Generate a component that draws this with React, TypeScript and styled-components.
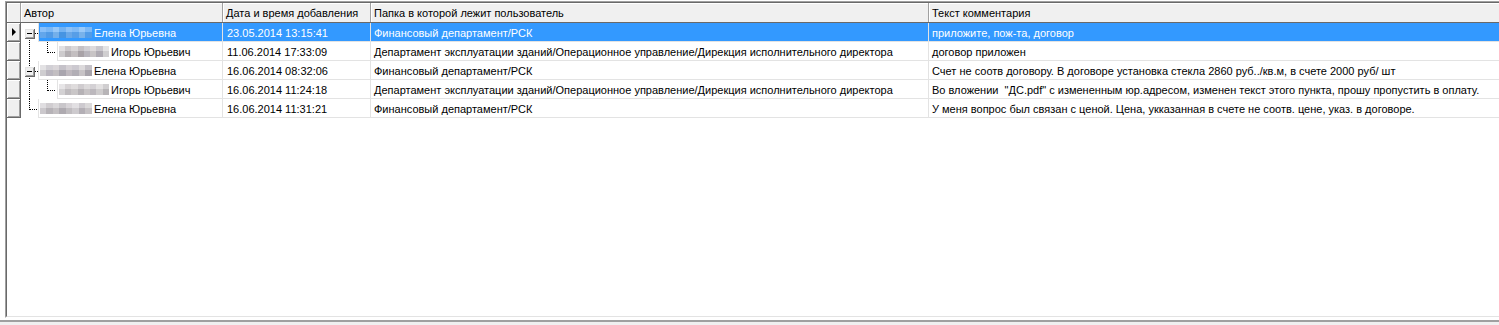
import React from "react";
import styled, { createGlobalStyle, css } from "styled-components";

const GlobalStyle = createGlobalStyle`
  html, body {
    margin: 0;
    padding: 0;
    background: #ffffff;
    overflow: hidden;
  }
  body {
    font-family: "Liberation Sans", Arial, sans-serif;
    font-size: 11px;
    color: #000;
  }
`;

const COLS = "14px 202px 148px 558px 1fr";

const Page = styled.div`
  width: 1499px;
  height: 325px;
  overflow: hidden;
  display: flex;
  flex-direction: column;
`;

const Frame = styled.div`
  margin: 1px 0 0 5px;
  width: 1510px;
  height: 319px;
  box-sizing: border-box;
  border-top: 1px solid #a0a0a0;
  border-left: 1px solid #a0a0a0;
  border-bottom: 1px solid #ffffff;
`;

const Inner = styled.div`
  height: 100%;
  box-sizing: border-box;
  border-top: 1px solid #696969;
  border-left: 1px solid #696969;
  border-bottom: 1px solid #e3e3e3;
  background: #fff;
`;

const BottomBar = styled.div`
  margin-top: 2px;
  height: 3px;
  border-top: 2px solid #a0a0a0;
  background: #f0f0f0;
`;

const HeaderRow = styled.div`
  display: grid;
  grid-template-columns: ${COLS};
  height: 20px;
  box-sizing: border-box;
  border-bottom: 1px solid #696969;
  background: #f0f0f0;
`;

const HeaderCell = styled.div`
  box-sizing: border-box;
  border-right: 1px solid #a0a0a0;
  box-shadow: inset 1px 1px 0 #ffffff;
  padding: 2px 0 0 3px;
  line-height: 17px;
  white-space: nowrap;
  overflow: hidden;
`;

const Corner = styled(HeaderCell)`
  padding: 0;
`;

const DataRow = styled.div`
  display: grid;
  grid-template-columns: ${COLS};
  height: 19px;
`;

const RowHead = styled.div`
  box-sizing: border-box;
  background: #f0f0f0;
  border-right: 1px solid #696969;
  border-bottom: 1px solid #696969;
  box-shadow: inset 1px 1px 0 #ffffff, inset -1px -1px 0 #a0a0a0;
  display: flex;
  align-items: center;
  justify-content: center;
`;

const Pointer = styled.span`
  width: 0;
  height: 0;
  border-left: 4px solid #000;
  border-top: 4px solid transparent;
  border-bottom: 4px solid transparent;
  margin-left: 1px;
`;

const selectedCss = css`
  background: #3399ff;
  color: #ffffff;
`;

const Cell = styled.div<{ $selected?: boolean }>`
  box-sizing: border-box;
  border-right: 1px solid #e3e3e3;
  border-bottom: 1px solid #e3e3e3;
  padding: 2px 0 0 3px;
  line-height: 16px;
  white-space: pre;
  overflow: hidden;
  ${(p) => p.$selected && selectedCss}
`;

const DateCell = styled(Cell)`
  padding-left: 4px;
`;

const AuthorCell = styled.div`
  display: flex;
  border-right: 1px solid #e3e3e3;
  box-sizing: border-box;
`;

const Gutter = styled.svg`
  flex: none;
  display: block;
`;

const NameCell = styled.div<{ $selected?: boolean }>`
  flex: 1;
  display: flex;
  align-items: center;
  gap: 2px;
  box-sizing: border-box;
  border-left: 1px solid #e3e3e3;
  border-bottom: 1px solid #e3e3e3;
  padding: 2px 0 0 1px;
  line-height: 16px;
  white-space: nowrap;
  ${(p) => p.$selected && selectedCss}
`;

const Blur = styled.span<{ $w: number }>`
  display: inline-block;
  width: ${(p) => p.$w}px;
  height: 11px;
  margin-top: -1px;
  filter: blur(0.7px);
  opacity: 0.9;
`;

const Blank = styled.div`
  flex: 1;
`;

type Row = {
  level: number;
  kind: "rootOpen" | "rootLast" | "child";
  first?: boolean;
  name: string;
  date: string;
  folder: string;
  comment: string;
  selected?: boolean;
  blur: string[];
};

const FIN = "Финансовый департамент/РСК";
const DEP =
  "Департамент эксплуатации зданий/Операционное управление/Дирекция исполнительного директора";

const rows: Row[] = [
  {
    level: 0,
    kind: "rootOpen",
    first: true,
    name: "Елена Юрьевна",
    date: "23.05.2014 13:15:41",
    folder: FIN,
    comment: "приложите, пож-та, договор",
    selected: true,
    blur: ["#6fb2f8", "#5aa5f2", "#82bdf6", "#4e9ded", "#76b4f4", "#62a9f3", "#88c0f7", "#5ba7f4"],
  },
  {
    level: 1,
    kind: "child",
    name: "Игорь Юрьевич",
    date: "11.06.2014 17:33:09",
    folder: DEP,
    comment: "договор приложен",
    blur: ["#d4d2d4", "#b5b0b4", "#c9c4c6", "#a9a3a8", "#bcb8c0", "#cfcacb", "#b1adb5", "#d8d6d8"],
  },
  {
    level: 0,
    kind: "rootOpen",
    name: "Елена Юрьевна",
    date: "16.06.2014 08:32:06",
    folder: FIN,
    comment: "Счет не соотв договору. В договоре установка стекла 2860 руб../кв.м, в счете 2000 руб/ шт",
    blur: ["#d6d4d8", "#bdb9c2", "#c8c3c7", "#aaa6b0", "#c2bcc2", "#b4b0b9", "#cdc9cc", "#a8a4ac"],
  },
  {
    level: 1,
    kind: "child",
    name: "Игорь Юрьевич",
    date: "16.06.2014 11:24:18",
    folder: DEP,
    comment: "Во вложении  \"ДС.pdf\" с измененным юр.адресом, изменен текст этого пункта, прошу пропустить в оплату.",
    blur: ["#dcdadc", "#c4bfc2", "#d0cccd", "#b9b4b8", "#cdc9cb", "#c0bcc1", "#d6d3d4", "#bbb7bb"],
  },
  {
    level: 0,
    kind: "rootLast",
    name: "Елена Юрьевна",
    date: "16.06.2014 11:31:21",
    folder: FIN,
    comment: "У меня вопрос был связан с ценой. Цена, укказанная в счете не соотв. цене, указ. в договоре.",
    blur: ["#d2cfd3", "#bab5bb", "#c9c5c8", "#b0abb2", "#c5c0c5", "#d4d1d5", "#b6b1b8", "#cbc7ca"],
  },
];

function blurBackground(colors: string[]) {
  const n = colors.length;
  const stops = colors
    .map((c, i) => `${c} ${(i * 100) / n}% ${((i + 1) * 100) / n}%`)
    .join(", ");
  return `linear-gradient(180deg, rgba(255,255,255,0.25) 0 45%, rgba(0,0,0,0.06) 45% 100%), linear-gradient(90deg, ${stops})`;
}

const DOT = "1 1";

function TreeLines({ row }: { row: Row }) {
  const width = row.level === 0 ? 17 : 36;
  const mid = 10.5;
  return (
    <Gutter width={width} height={19} shapeRendering="crispEdges">
      {row.kind === "rootOpen" && (
        <g>
          {!row.first && (
            <line x1={8.5} y1={0} x2={8.5} y2={5} stroke="#000" strokeDasharray={DOT} />
          )}
          <line x1={8.5} y1={15} x2={8.5} y2={19} stroke="#000" strokeDasharray={DOT} />
          <line x1={14} y1={mid} x2={17} y2={mid} stroke="#000" strokeDasharray={DOT} />
          <rect x={3} y={5} width={11} height={11} fill="#f0f0f0" />
          <path d="M3.5 15.5 V5.5 H13.5" stroke="#ffffff" fill="none" />
          <path d="M4.5 14.5 V6.5 H12.5" stroke="#e3e3e3" fill="none" />
          <path d="M3.5 15.5 H13.5 V5.5" stroke="#696969" fill="none" />
          <path d="M4.5 14.5 H12.5 V6.5" stroke="#a0a0a0" fill="none" />
          <line x1={6} y1={mid} x2={11} y2={mid} stroke="#000" />
        </g>
      )}
      {row.kind === "rootLast" && (
        <g>
          <line x1={8.5} y1={0} x2={8.5} y2={mid} stroke="#000" strokeDasharray={DOT} />
          <line x1={8.5} y1={mid} x2={17} y2={mid} stroke="#000" strokeDasharray={DOT} />
        </g>
      )}
      {row.kind === "child" && (
        <g>
          <line x1={8.5} y1={0} x2={8.5} y2={19} stroke="#000" strokeDasharray={DOT} />
          <line x1={26.5} y1={0} x2={26.5} y2={mid} stroke="#000" strokeDasharray={DOT} />
          <line x1={26.5} y1={mid} x2={35} y2={mid} stroke="#000" strokeDasharray={DOT} />
        </g>
      )}
    </Gutter>
  );
}

export default function App() {
  return (
    <Page>
      <GlobalStyle />
      <Frame>
        <Inner>
          <HeaderRow>
            <Corner />
            <HeaderCell>Автор</HeaderCell>
            <HeaderCell>Дата и время добавления</HeaderCell>
            <HeaderCell>Папка в которой лежит пользователь</HeaderCell>
            <HeaderCell>Текст комментария</HeaderCell>
          </HeaderRow>
          {rows.map((row, i) => (
            <DataRow key={i}>
              <RowHead>{row.selected && <Pointer />}</RowHead>
              <AuthorCell>
                <TreeLines row={row} />
                <NameCell $selected={row.selected}>
                  <Blur
                    $w={row.level === 0 ? 52 : 50}
                    style={{ background: blurBackground(row.blur) }}
                  />
                  <span>{row.name}</span>
                </NameCell>
              </AuthorCell>
              <DateCell $selected={row.selected}>{row.date}</DateCell>
              <Cell $selected={row.selected}>{row.folder}</Cell>
              <Cell $selected={row.selected}>{row.comment}</Cell>
            </DataRow>
          ))}
          <Blank />
        </Inner>
      </Frame>
      <BottomBar />
    </Page>
  );
}
